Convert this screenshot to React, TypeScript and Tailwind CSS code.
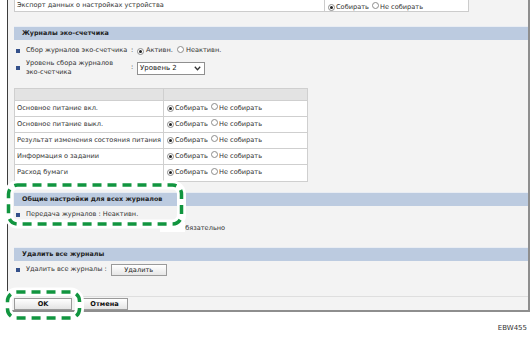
import React from "react";

function Radio({ on }: { on?: boolean }) {
  return (
    <span className="inline-flex h-[7px] w-[7px] shrink-0 items-center justify-center rounded-full border border-[#8c8c8c] bg-white">
      {on && <span className="h-[3px] w-[3px] rounded-full bg-[#222]" />}
    </span>
  );
}

function Bullet() {
  return <span className="h-[4px] w-[4px] shrink-0 bg-[#34508a]" />;
}

function Collect() {
  return (
    <div className="flex items-center whitespace-nowrap">
      <Radio on />
      <span className="ml-[1px]">Собирать</span>
      <span className="ml-[3px]">
        <Radio />
      </span>
      <span className="ml-[1px]">Не собирать</span>
    </div>
  );
}

function Band({ title }: { title: string }) {
  return (
    <div className="h-[14px] whitespace-nowrap border-t border-[#e9edf3] bg-[#bccbe0] pl-[8px] text-[6.4px] font-bold leading-[13px] text-[#1e1e1e]">
      {title}
    </div>
  );
}

const rows = [
  "Основное питание вкл.",
  "Основное питание выкл.",
  "Результат изменения состояния питания",
  "Информация о задании",
  "Расход бумаги"
];

export default function App() {
  return (
    <div className="relative h-[337px] w-[530px] overflow-hidden bg-white font-['DejaVu_Sans',sans-serif] text-[6.6px] text-[#333]">
      <div className="ml-[7px] flex h-[312px] w-[523px] flex-col border-b-2 border-l border-r-2 border-b-[#8e8e8e] border-l-[#3c3c3c] border-r-[#8e8e8e] bg-[#f3f3f3] pl-[6px]">
        <div className="flex h-[12px] w-[455px] border-x border-b border-[#cccccc] bg-white leading-[11px]">
          <div className="w-[310px] whitespace-nowrap border-r border-[#cccccc] pl-[2px]">Экспорт данных о настройках устройства</div>
          <div className="pl-[3px] pt-[2px]">
            <Collect />
          </div>
        </div>

        <div className="mt-[14px]">
          <Band title="Журналы эко-счетчика" />
        </div>

        <div className="mt-[5px] flex h-[12px] items-center whitespace-nowrap pl-[2px]">
          <Bullet />
          <span className="ml-[6px] w-[105px]">Сбор журналов эко-счетчика</span>
          <span className="w-[6px]">:</span>
          <Radio on />
          <span className="ml-[2px]">Активн.</span>
          <span className="ml-[4px]">
            <Radio />
          </span>
          <span className="ml-[2px]">Неактивн.</span>
        </div>

        <div className="mt-[1px] flex h-[20px] items-center whitespace-nowrap pl-[2px]">
          <Bullet />
          <span className="ml-[6px] w-[105px] leading-[9px]">
            Уровень сбора журналов
            <br />
            эко-счетчика
          </span>
          <span className="w-[6px]">:</span>
          <div className="flex h-[13px] w-[68px] items-center justify-between border border-[#8f8f8f] bg-white pl-[2px] pr-[3px] text-[7px] text-[#222]">
            <span>Уровень 2</span>
            <svg width="7" height="5" viewBox="0 0 7 5">
              <path d="M0.8 0.8 L3.5 3.8 L6.2 0.8" fill="none" stroke="#333" strokeWidth="1.3" />
            </svg>
          </div>
        </div>

        <div className="mt-[10px] w-[294px] border border-[#cfcfcf] bg-white">
          <div className="flex h-[12px] border-b border-[#cfcfcf] bg-[#e3e3e3]">
            <div className="w-[149px] border-r border-[#cfcfcf]" />
            <div className="flex-1" />
          </div>
          {rows.map((r, i) => (
            <div key={r} className={"flex h-[16px] items-center" + (i < rows.length - 1 ? " border-b border-[#cfcfcf]" : "")}>
              <div className="flex h-full w-[149px] items-center whitespace-nowrap border-r border-[#cfcfcf] pl-[2px]">{r}</div>
              <div className="pl-[3px]">
                <Collect />
              </div>
            </div>
          ))}
        </div>

        <div className="mt-[10px]">
          <Band title="Общие настройки для всех журналов" />
        </div>

        <div className="mt-[3px] flex h-[12px] items-center whitespace-nowrap pl-[2px]">
          <Bullet />
          <span className="ml-[6px]">Передача журналов : Неактивн.</span>
        </div>

        <div className="mt-[2px] flex h-[12px] items-center pl-[166px]">
          <span>Обязательно</span>
        </div>

        <div className="mt-[12px]">
          <Band title="Удалить все журналы" />
        </div>

        <div className="mt-[3px] flex h-[12px] items-center whitespace-nowrap pl-[2px]">
          <Bullet />
          <span className="ml-[6px]">Удалить все журналы :</span>
          <button
            type="button"
            className="ml-[4px] h-[12px] w-[56px] border border-[#9a9a9a] bg-gradient-to-b from-white to-[#e6e6e6] text-[6.6px] leading-[10px] text-[#222]"
          >
            Удалить
          </button>
        </div>

        <div className="mt-[20px] -ml-[6px] h-[1px] bg-[#dedede]" />

        <div className="mt-auto flex">
          <button
            type="button"
            className="h-[12px] w-[58px] border border-[#9a9a9a] bg-gradient-to-b from-white to-[#e4e4e4] text-[6.6px] font-bold leading-[10px] text-[#111]"
          >
            OK
          </button>
          <button
            type="button"
            className="ml-[6px] h-[12px] w-[50px] border border-[#9a9a9a] bg-gradient-to-b from-white to-[#e4e4e4] pl-[3px] text-[6.6px] font-bold leading-[10px] text-[#111]"
          >
            Отмена
          </button>
        </div>
      </div>

      <div className="mt-[12px] pr-[3px] text-right text-[7px] leading-[8px] text-[#333]">EBW455</div>

      <svg className="pointer-events-none absolute left-0 top-0" width="530" height="337" viewBox="0 0 530 337">
        <rect x="8.5" y="185" width="173" height="39" rx="9" fill="none" stroke="#fff" strokeWidth="9" />
        <rect x="160" y="222" width="25" height="10" fill="#fff" />
        <rect x="8.5" y="185" width="173" height="39" rx="9" fill="none" stroke="#11953f" strokeWidth="3.5" strokeDasharray="9 6" />
        <rect x="7.5" y="292" width="72" height="26" rx="9" fill="none" stroke="#fff" strokeWidth="9" />
        <rect x="7.5" y="292" width="72" height="26" rx="9" fill="none" stroke="#11953f" strokeWidth="3.5" strokeDasharray="9 6" />
      </svg>
    </div>
  );
}
